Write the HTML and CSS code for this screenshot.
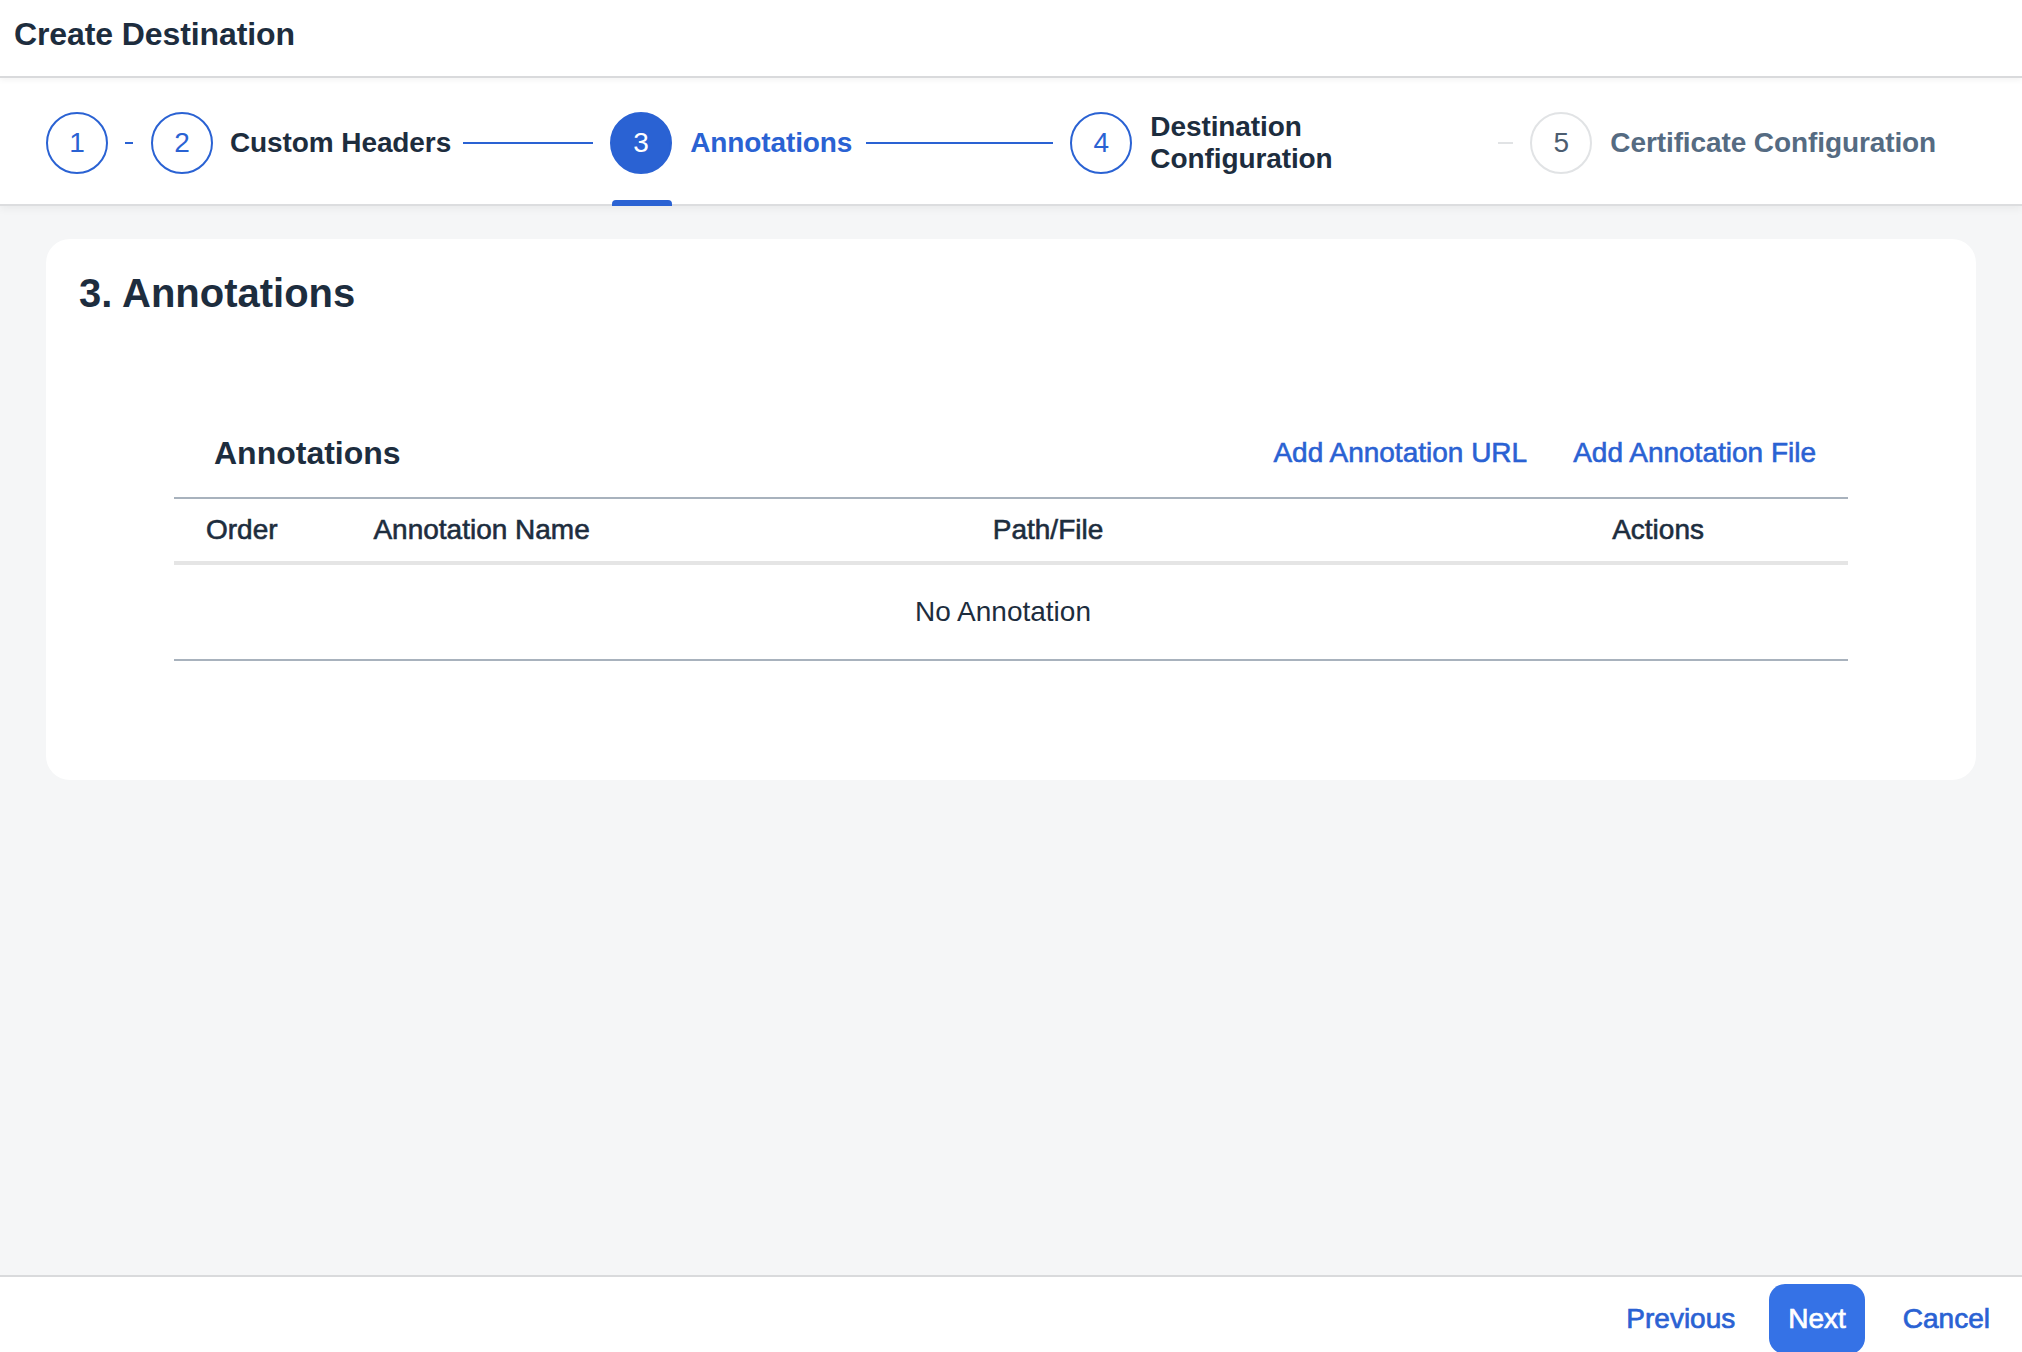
FILE: index.html
```html
<!DOCTYPE html>
<html lang="en">
<head>
<meta charset="utf-8">
<title>Create Destination</title>
<link rel="stylesheet" href="styles.css">
</head>
<body>
<div class="app">
  <header class="header">
    <h1 class="title">Create Destination</h1>
  </header>

  <nav class="stepper">
    <div class="step"><span class="circle">1</span></div>
    <span class="dash"></span>
    <div class="step"><span class="circle">2</span></div>
    <span class="label label-2">Custom Headers</span>
    <span class="line line-a"></span>
    <div class="step step-current"><span class="circle circle-active">3</span><span class="indicator"></span></div>
    <span class="label label-3 label-active">Annotations</span>
    <span class="line line-b"></span>
    <div class="step step-4"><span class="circle">4</span></div>
    <span class="label label-4">Destination Configuration</span>
    <span class="line-gray"></span>
    <div class="step step-5"><span class="circle circle-disabled">5</span></div>
    <span class="label label-5 label-disabled">Certificate Configuration</span>
  </nav>

  <main class="main">
    <section class="card">
      <h2 class="card-title">3. Annotations</h2>
      <div class="table-section">
        <div class="toolbar">
          <span class="toolbar-title">Annotations</span>
          <div class="toolbar-actions">
            <a class="link">Add Annotation URL</a>
            <a class="link">Add Annotation File</a>
          </div>
        </div>
        <div class="table">
          <div class="thead">
            <div class="th">Order</div>
            <div class="th">Annotation Name</div>
            <div class="th">Path/File</div>
            <div class="th">Actions</div>
          </div>
          <div class="empty">No Annotation</div>
        </div>
      </div>
    </section>
  </main>

  <footer class="footer">
    <button class="btn btn-ghost">Previous</button>
    <button class="btn btn-primary">Next</button>
    <button class="btn btn-ghost btn-last">Cancel</button>
  </footer>
</div>
</body>
</html>
```

FILE: styles.css
```css
* { box-sizing: border-box; }

html, body {
  margin: 0;
  padding: 0;
  height: 100%;
  overflow: hidden;
}

body {
  font-family: "Liberation Sans", Arial, sans-serif;
  color: #1d2d3e;
  background: #f5f6f7;
}

.app {
  display: flex;
  flex-direction: column;
  height: 100vh;
}

/* Header */
.header {
  height: 78px;
  background: #ffffff;
  border-bottom: 2px solid #d9dadc;
  padding: 14px 0 0 14px;
  position: relative;
  z-index: 2;
  box-shadow: 0 2px 6px rgba(0, 0, 0, 0.05);
}

.title {
  margin: 0;
  font-size: 32px;
  line-height: 40px;
  font-weight: 700;
  color: #1d2d3e;
  letter-spacing: -0.1px;
}

/* Stepper */
.stepper {
  height: 128px;
  background: #ffffff;
  border-bottom: 2px solid #dcdddf;
  display: flex;
  align-items: center;
  padding-left: 46px;
  padding-top: 3px;
  position: relative;
  z-index: 1;
  box-shadow: 0 3px 8px rgba(0, 0, 0, 0.05);
}

.step {
  align-self: stretch;
  display: flex;
  align-items: center;
  position: relative;
}

.circle {
  width: 62px;
  height: 62px;
  border-radius: 50%;
  border: 2px solid #2a62d3;
  color: #2a62d3;
  display: flex;
  align-items: center;
  justify-content: center;
  font-size: 28px;
  line-height: 1;
  background: #ffffff;
}

.circle-active {
  background: #2a62d3;
  color: #ffffff;
}

.circle-disabled {
  border-color: #e1e3e5;
  color: #4c5d70;
}

.indicator {
  position: absolute;
  left: 2px;
  bottom: -2px;
  width: 60px;
  height: 6px;
  background: #2a62d3;
  border-radius: 4px 4px 0 0;
}

.dash {
  width: 8px;
  height: 2px;
  background: #2a62d3;
  margin-left: 17px;
  margin-right: 18px;
}

.label {
  font-size: 28px;
  font-weight: 700;
  line-height: 32px;
  color: #1d2d3e;
  margin-left: 18px;
  letter-spacing: -0.1px;
}

.label-2 { margin-left: 17px; }

.label-active { color: #2a62d3; }

.label-4 { width: 190px; }

.label-disabled { color: #556b82; }

.line {
  height: 2px;
  background: #2a62d3;
}

.line-a {
  width: 130px;
  margin-left: 12px;
  margin-right: 17px;
}

.line-b {
  width: 187px;
  margin-left: 14px;
  margin-right: 17px;
}

.line-gray {
  width: 15px;
  height: 2px;
  background: #e1e3e5;
  margin-left: 158px;
  margin-right: 17px;
}

/* Main */
.main {
  flex: 1;
  padding: 33px 46px 0;
  background: #f5f6f7;
}

.card {
  background: #ffffff;
  border-radius: 24px;
  padding: 30px 33px 119px;
}

.card-title {
  margin: 0 0 92px;
  font-size: 40px;
  line-height: 48px;
  font-weight: 700;
  color: #1d2d3e;
}

.table-section {
  margin: 0 95px;
}

.toolbar {
  height: 88px;
  display: flex;
  align-items: center;
  justify-content: space-between;
  padding: 0 32px 0 40px;
}

.toolbar-title {
  font-size: 32px;
  font-weight: 700;
  line-height: 40px;
}

.toolbar-actions {
  display: flex;
  gap: 46px;
}

.link {
  font-size: 28px;
  line-height: 36px;
  color: #2a62d3;
  -webkit-text-stroke: 0.6px #2a62d3;
  cursor: pointer;
}

.table {
  border-top: 2px solid #a8b2bd;
  border-bottom: 2px solid #a8b2bd;
}

.thead {
  display: grid;
  grid-template-columns: 10% 37% 37% 16%;
  height: 66px;
  align-items: center;
  border-bottom: 4px solid #e5e5e5;
}

.th {
  padding-left: 32px;
  font-size: 28px;
  line-height: 36px;
  color: #1d2d3e;
  -webkit-text-stroke: 0.6px #1d2d3e;
}

.empty {
  height: 94px;
  display: flex;
  align-items: center;
  justify-content: center;
  padding-right: 16px;
  font-size: 28px;
  color: #1d2d3e;
}

/* Footer */
.footer {
  height: 77px;
  flex-shrink: 0;
  background: #ffffff;
  border-top: 2px solid #d9dadc;
  display: flex;
  justify-content: flex-end;
  align-items: flex-start;
  padding: 7px 16px 0 0;
  gap: 18px;
}

.btn {
  font-family: "Liberation Sans", Arial, sans-serif;
  font-size: 28px;
  height: 70px;
  padding: 0 16px;
  border-radius: 16px;
  border: none;
  background: transparent;
  cursor: pointer;
  flex-shrink: 0;
}

.btn-ghost {
  color: #2a62d3;
  -webkit-text-stroke: 0.7px #2a62d3;
}

.btn-primary {
  background: #3572e6;
  color: #ffffff;
  -webkit-text-stroke: 0.7px #ffffff;
  padding: 0 19px;
}

.btn-last { margin-left: 4px; }
```
